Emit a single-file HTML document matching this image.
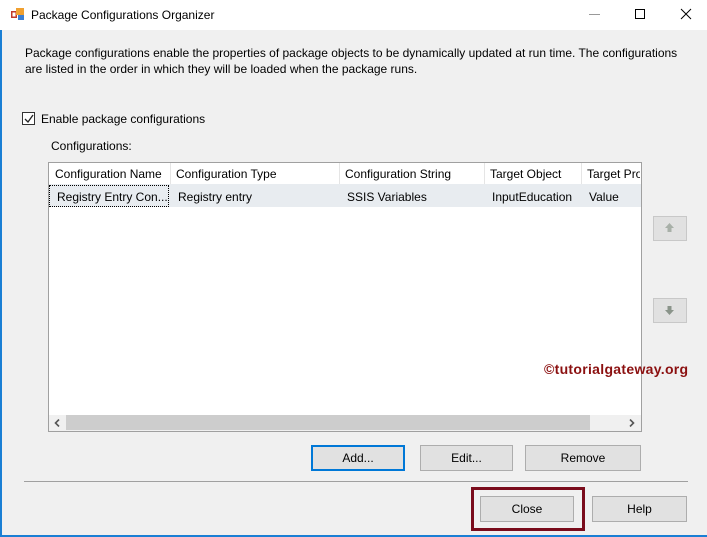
<!DOCTYPE html>
<html><head><style>
*{margin:0;padding:0;box-sizing:border-box}
body{width:707px;height:537px;overflow:hidden;background:#f0f0f0;font-family:"Liberation Sans",sans-serif;font-size:12px;color:#000;position:relative}
.a{position:absolute;white-space:nowrap}
.btn{position:absolute;background:#e1e1e1;border:1px solid #adadad;text-align:center;line-height:25px;font-size:12px}
</style></head><body>
<div class="a" style="left:0;top:0;width:707px;height:30px;background:#fff"></div>
<div class="a" style="left:0;top:30px;width:2px;height:507px;background:#1a7fd4"></div>
<div class="a" style="left:0;top:535px;width:707px;height:2px;background:#1a7fd4"></div>
<svg class="a" style="left:10px;top:7px" width="16" height="14"><rect x="1" y="4" width="6" height="7" fill="#c0392b"/><rect x="2.5" y="5.5" width="3" height="4" fill="#fff"/><rect x="6" y="1" width="8" height="7" fill="#f0a030"/><rect x="8" y="8" width="6" height="5" fill="#3a7fd4"/></svg>
<div class="a" style="left:31px;top:8px;font-size:12px">Package Configurations Organizer</div>
<div class="a" style="left:589px;top:14px;width:11px;height:1px;background:#999"></div>
<div class="a" style="left:635px;top:9px;width:10px;height:10px;border:1px solid #000"></div>
<svg class="a" style="left:680px;top:8px" width="12" height="12"><path d="M1 1 L11 11 M11 1 L1 11" stroke="#000" stroke-width="1"/></svg>
<div class="a" style="left:25px;top:45px;line-height:16px">Package configurations enable the properties of package objects to be dynamically updated at run time. The configurations<br>are listed in the order in which they will be loaded when the package runs.</div>
<div class="a" style="left:22px;top:112px;width:13px;height:13px;border:1px solid #333;background:#fff"></div>
<svg class="a" style="left:24px;top:114px" width="10" height="10"><path d="M1 5 L4 8 L9 1" stroke="#222" stroke-width="1.3" fill="none"/></svg>
<div class="a" style="left:41px;top:112px">Enable package configurations</div>
<div class="a" style="left:51px;top:139px">Configurations:</div>
<div class="a" style="left:48px;top:162px;width:594px;height:270px;background:#fff;border:1px solid #a0a0a0"></div>
<div class="a" style="left:49px;top:184px;width:592px;height:23px;background:#e8ecf0"></div>
<div class="a" style="left:49px;top:185px;width:120px;height:22px;border:1px dotted #000"></div>
<div class="a" style="left:170px;top:163px;width:1px;height:21px;background:#e5e5e5"></div>
<div class="a" style="left:339px;top:163px;width:1px;height:21px;background:#e5e5e5"></div>
<div class="a" style="left:484px;top:163px;width:1px;height:21px;background:#e5e5e5"></div>
<div class="a" style="left:581px;top:163px;width:1px;height:21px;background:#e5e5e5"></div>
<div class="a" style="left:55px;top:167px">Configuration Name</div>
<div class="a" style="left:176px;top:167px">Configuration Type</div>
<div class="a" style="left:345px;top:167px">Configuration String</div>
<div class="a" style="left:490px;top:167px">Target Object</div>
<div class="a" style="left:587px;top:167px;width:53px;overflow:hidden">Target Property</div>
<div class="a" style="left:57px;top:190px">Registry Entry Con...</div>
<div class="a" style="left:178px;top:190px">Registry entry</div>
<div class="a" style="left:347px;top:190px">SSIS Variables</div>
<div class="a" style="left:492px;top:190px">InputEducation</div>
<div class="a" style="left:589px;top:190px">Value</div>
<div class="a" style="left:49px;top:415px;width:592px;height:16px;background:#f0f0f0"></div>
<div class="a" style="left:66px;top:415px;width:524px;height:15px;background:#cdcdcd"></div>
<svg class="a" style="left:53px;top:419px" width="8" height="8"><path d="M6 0.5 L2.5 4 L6 7.5" stroke="#555" stroke-width="1.6" fill="none"/></svg>
<svg class="a" style="left:628px;top:419px" width="8" height="8"><path d="M2 0.5 L5.5 4 L2 7.5" stroke="#555" stroke-width="1.6" fill="none"/></svg>
<div class="a" style="left:653px;top:216px;width:34px;height:25px;background:#e1e1e1;border:1px solid #c8c8c8"></div>
<svg class="a" style="left:664px;top:222px" width="11" height="11"><path d="M5.5 1 L10 6 H7.5 V10 H3.5 V6 H1 Z" fill="#a8b0a8"/></svg>
<div class="a" style="left:653px;top:298px;width:34px;height:25px;background:#e1e1e1;border:1px solid #c8c8c8"></div>
<svg class="a" style="left:664px;top:305px" width="11" height="11"><path d="M5.5 10 L10 5 H7.5 V1 H3.5 V5 H1 Z" fill="#8a948a"/></svg>
<div class="a" style="left:544px;top:361px;font-size:14px;font-weight:bold;color:#8b1010;letter-spacing:0.3px">©tutorialgateway.org</div>
<div class="btn" style="left:311px;top:445px;width:94px;height:26px;border:2px solid #0078d7;line-height:23px">Add...</div>
<div class="btn" style="left:420px;top:445px;width:93px;height:26px">Edit...</div>
<div class="btn" style="left:525px;top:445px;width:116px;height:26px">Remove</div>
<div class="a" style="left:24px;top:481px;width:664px;height:1px;background:#a0a0a0"></div>
<div class="a" style="left:471px;top:487px;width:114px;height:44px;border:3px solid #7a0c1c"></div>
<div class="btn" style="left:480px;top:496px;width:94px;height:26px">Close</div>
<div class="btn" style="left:592px;top:496px;width:95px;height:26px">Help</div>
</body></html>
